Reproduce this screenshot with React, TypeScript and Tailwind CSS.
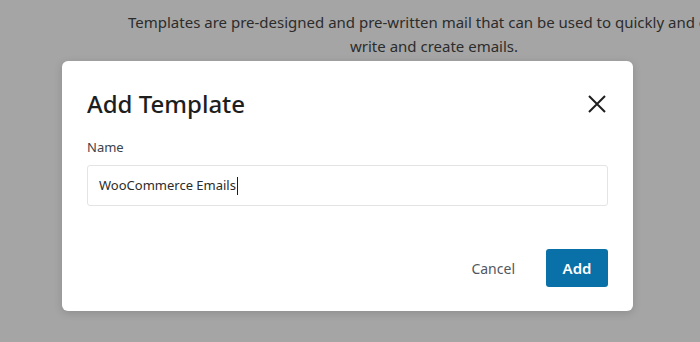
import React from "react";

export default function App() {
  return (
    <div
      className="relative w-[700px] h-[342px] overflow-hidden bg-[#a5a5a5]"
      style={{ fontFamily: '"Noto Sans", "Open Sans", sans-serif' }}
    >
      <div className="pt-[10px] text-[15px] leading-[24px] text-[#2c2c2c] whitespace-nowrap">
        <div className="pl-[128px]">
          Templates are pre-designed and pre-written mail that can be used to quickly and easily
        </div>
        <div className="pl-[350px]">write and create emails.</div>
      </div>

      <div className="absolute left-[62px] top-[61px] w-[571px] h-[250px] rounded-[6px] bg-white shadow-[0_2px_8px_rgba(0,0,0,0.15)] flex flex-col px-[25px]">
        <div className="flex items-center justify-between pt-[26px]">
          <h2 className="text-[24px] leading-[34px] font-medium text-[#1e1e1e]">Add Template</h2>
          <button className="mr-[-3px] w-[28px] h-[28px] flex items-center justify-center text-[#1e1e1e]">
            <svg width="20" height="20" viewBox="0 0 20 20" fill="none" stroke="currentColor" strokeWidth="2">
              <path d="M2 2 L18 18 M18 2 L2 18" />
            </svg>
          </button>
        </div>
        <label className="mt-[17px] text-[13px] leading-[18px] text-[#3c434a]">Name</label>
        <div className="mt-[9px] h-[41px] w-[521px] border border-[#e4e4e4] rounded-[3px] flex items-center px-[11px] text-[13px] text-[#2c2c2c]">
          WooCommerce Emails<span className="inline-block w-px h-[18px] bg-[#1e1e1e] ml-[1px]" />
        </div>
        <div className="mt-[43px] flex items-center justify-end">
          <button className="text-[14px] text-[#50575e] mr-[31px]">Cancel</button>
          <button className="w-[62px] h-[38px] rounded-[3px] bg-[#0a70a8] text-white text-[15px] font-semibold">
            Add
          </button>
        </div>
      </div>
    </div>
  );
}
